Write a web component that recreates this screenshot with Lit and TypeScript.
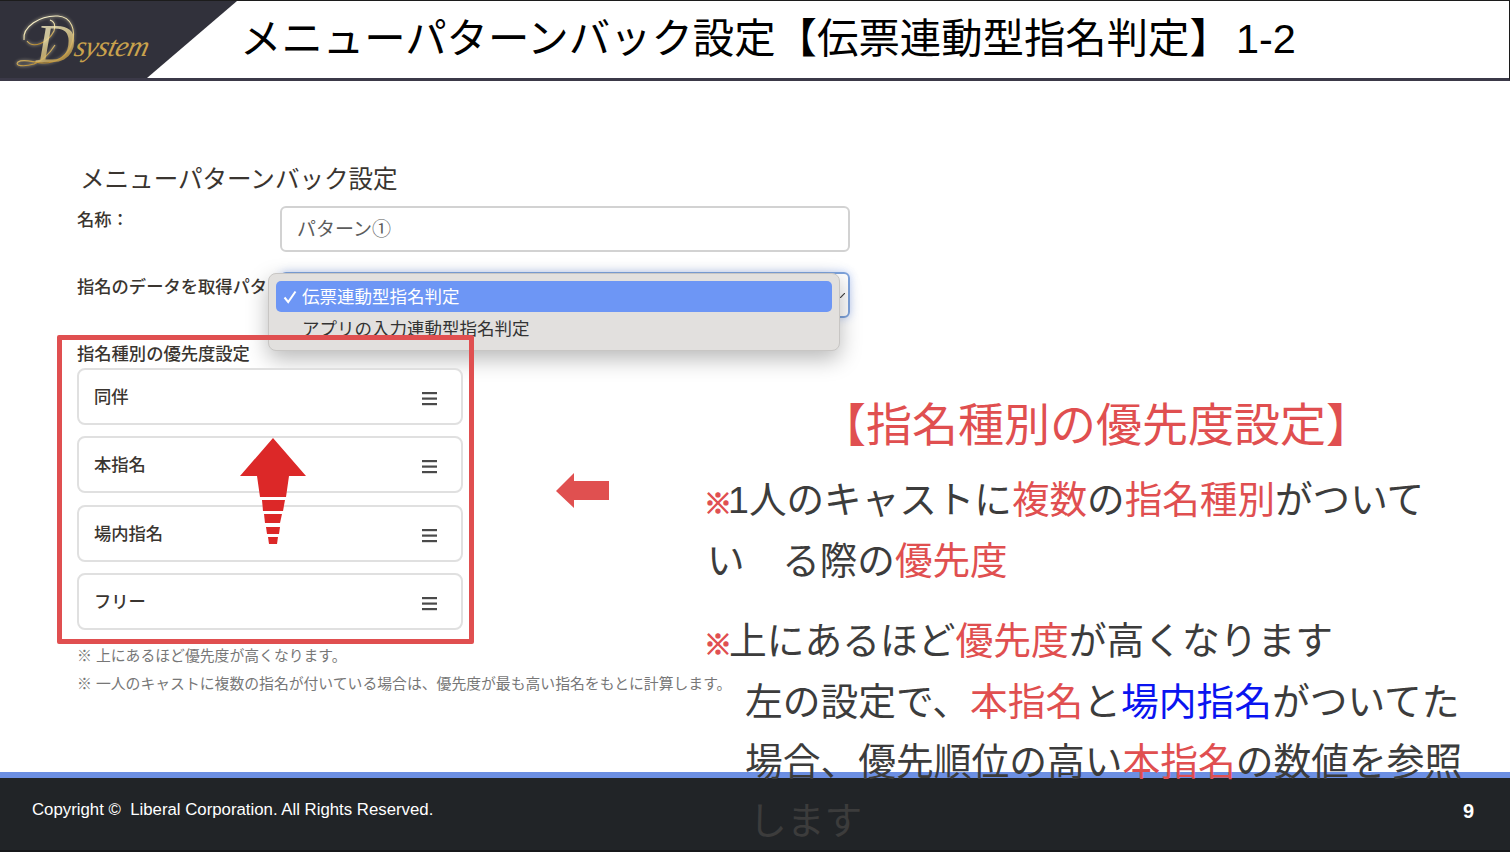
import { LitElement, html, css, svg } from "lit";
import { customElement } from "lit/decorators.js";

const priorityItems = ["同伴", "本指名", "場内指名", "フリー"];

const stripes = [
  "262,500 285,500 283,511 263,511",
  "264,514 282,514 280,523 265,523",
  "266,527 280,527 279,534 267,534",
  "268,537 278,537 277,544 269,544",
];

@customElement("app-root")
export class AppRoot extends LitElement {
  static styles = css`
    :host {
      display: flex;
      flex-direction: column;
      position: relative;
      width: 1510px;
      height: 852px;
      overflow: hidden;
      background: #fff;
      font-family: "Liberation Sans", "Noto Sans CJK JP", sans-serif;
      color: #3c3c3c;
    }

    /* header */
    .header {
      flex: none;
      display: flex;
      align-items: center;
      box-sizing: border-box;
      height: 81px;
      border-top: 1px solid #1c1c1c;
      border-right: 1px solid #1c1c1c;
      border-bottom: 3px solid #3b3948;
    }
    .logo {
      flex: none;
      display: block;
      width: 237px;
      height: 77px;
    }
    .title {
      margin: 0 0 0 3px;
      padding-bottom: 1px;
      font-size: 41.4px;
      font-weight: 400;
      line-height: 1;
      color: #000;
      white-space: nowrap;
    }
    .title-num {
      margin-left: 5px;
      font-size: 41.5px;
    }

    /* body */
    .main {
      flex: 1;
      position: relative;
      display: grid;
      grid-template-columns: 630px 1fr;
      padding-left: 77px;
      min-height: 0;
    }

    .form {
      padding-top: 82px;
      color: #3a3530;
      font-size: 17.3px;
      font-weight: 500;
    }
    .form-title {
      margin: 0 0 0 3px;
      font-size: 24.55px;
      font-weight: 400;
      line-height: 34px;
    }
    .row {
      display: grid;
      grid-template-columns: 203px 570px;
      white-space: nowrap;
    }
    .row-name {
      margin-top: 9px;
    }
    .row-source {
      margin-top: 20px;
    }
    .row label {
      line-height: 26px;
    }
    .row-name label {
      margin-top: 1px;
    }
    .row-source label {
      margin-top: 2px;
    }
    .input {
      box-sizing: border-box;
      height: 46px;
      padding-left: 15px;
      border: 2px solid #d2d2d2;
      border-radius: 6px;
      font-size: 19px;
      font-weight: 400;
      line-height: 43px;
      color: #5c5c5c;
    }
    .select {
      position: relative;
      box-sizing: border-box;
      height: 46px;
      border: 2px solid #7ea3dc;
      border-radius: 6px;
      box-shadow: 0 0 8px rgba(110, 150, 240, 0.45);
    }
    .chevron {
      position: absolute;
      right: 3px;
      top: 19px;
      width: 5px;
      height: 5px;
    }
    .dropdown {
      position: absolute;
      left: -14px;
      top: -1px;
      box-sizing: border-box;
      width: 572px;
      height: 78px;
      padding: 7px 7px;
      border: 1px solid #c8c6c4;
      border-radius: 8px;
      background: #e2e0de;
      box-shadow: 0 8px 22px rgba(0, 0, 0, 0.28);
      font-size: 17.5px;
      font-weight: 400;
      color: #333;
    }
    .option {
      display: flex;
      align-items: center;
      height: 31px;
      padding-left: 26px;
      border-radius: 5px;
    }
    .option.selected {
      position: relative;
      padding-bottom: 2px;
      box-sizing: border-box;
      background: #6d96f5;
      color: #fff;
    }
    .check {
      position: absolute;
      left: 7px;
      top: 9px;
      width: 14px;
      height: 14px;
    }

    .priority {
      position: relative;
      margin-top: 23px;
    }
    .priority-label {
      margin-bottom: 1px;
      line-height: 26px;
    }
    .list {
      display: flex;
      flex-direction: column;
      gap: 11.4px;
      width: 386px;
    }
    .item {
      display: flex;
      align-items: center;
      justify-content: space-between;
      box-sizing: border-box;
      height: 57px;
      padding: 0 24px 0 15px;
      border: 2px solid #e0e0e0;
      border-radius: 8px;
      background: #fff;
    }
    .item span {
      padding-bottom: 2px;
    }
    .bars {
      display: block;
      width: 15px;
      height: 14px;
      margin-top: 5px;
    }
    .frame {
      position: absolute;
      left: -20px;
      top: -6px;
      box-sizing: border-box;
      width: 417px;
      height: 309px;
      border: 5px solid #e04f50;
      border-radius: 2px;
      pointer-events: none;
    }
    .notes {
      margin-top: 12px;
      font-size: 14.83px;
      font-weight: 400;
      line-height: 28px;
      color: #777;
      white-space: nowrap;
    }

    .marks {
      position: absolute;
      left: 0;
      top: -81px;
      width: 700px;
      height: 700px;
      pointer-events: none;
    }

    /* right side explanation, runs over the footer in the original */
    .explain {
      position: relative;
      z-index: 2;
      padding-top: 314px;
      line-height: 61px;
      color: #3c3c3c;
      white-space: nowrap;
    }
    .explain h2 {
      margin: 0 0 15px;
      width: 778px;
      text-align: center;
      font-size: 46px;
      font-weight: 400;
      line-height: 60px;
      color: #e04f50;
    }
    .explain p {
      margin: 0;
      font-size: 37.75px;
    }
    .explain p.first {
      font-size: 37.6px;
    }
    .explain p + p {
      margin-top: 19px;
    }
    .red {
      color: #e04f50;
    }
    .blue {
      color: #0a14f0;
    }
    .mark {
      display: inline-block;
      width: 25px;
      margin-left: -3px;
      font-family: "Noto Sans CJK JP", sans-serif;
      font-size: 28px;
      font-weight: 700;
      letter-spacing: -4px;
      -webkit-text-stroke: 1px #e04f50;
      color: #e04f50;
      vertical-align: -1px;
      line-height: 1;
    }
    .first .mark {
      width: 24px;
    }
    .wrapped {
      display: block;
    }
    .indent {
      display: block;
      padding-left: 38px;
    }
    .indent.tight {
      margin-top: -1px;
    }
    .indent.last {
      margin-top: -2px;
      padding-left: 42px;
    }

    /* footer */
    .footer {
      flex: none;
      display: flex;
      align-items: center;
      justify-content: space-between;
      box-sizing: border-box;
      height: 80px;
      padding: 0 36px 8px 32px;
      border-top: 6px solid #6c8fe3;
      border-bottom: 2px solid #16181a;
      background: #212427;
      color: #fff;
      font-size: 16.8px;
    }
    .page {
      margin-top: 3px;
      font-size: 20px;
      font-weight: 700;
    }
  `;

  private renderLogo() {
    return html`
      <svg class="logo" viewBox="0 0 237 77" aria-label="Dsystem">
        <defs>
          <linearGradient id="gold" x1="0" y1="0" x2="0.4" y2="1">
            <stop offset="0" stop-color="#fbf8df"></stop>
            <stop offset="0.5" stop-color="#efe0a4"></stop>
            <stop offset="1" stop-color="#b98a2c"></stop>
          </linearGradient>
          <filter id="glow" x="-20%" y="-20%" width="140%" height="140%">
            <feGaussianBlur stdDeviation="1.8"></feGaussianBlur>
          </filter>
        </defs>
        <polygon points="0,0 237,0 147,77 0,77" fill="#31313b"></polygon>
        <g fill="none" stroke="#fff4c8" stroke-width="2.4" opacity="0.35" filter="url(#glow)">
          <path d="M24 39C22 26 40 14 58 15C72 16 76 30 72 42C68 55 56 62 44 62C34 62 24 57 18 61C14 65 24 66 34 63C42 60 50 52 55 44"></path>
          <path d="M27 40C33 48 48 42 54 30C56 24 54 20 50 19"></path>
        </g>
        <g fill="none" stroke="url(#gold)" stroke-width="1.1">
          <path d="M24 39C22 26 40 14 58 15C72 16 76 30 72 42C68 55 56 62 44 62C34 62 24 57 18 61C14 65 24 66 34 63C42 60 50 52 55 44"></path>
          <path d="M27 40C33 48 48 42 54 30C56 24 54 20 50 19"></path>
        </g>
        <text
          x="36"
          y="61"
          font-family="Liberation Serif, serif"
          font-style="italic"
          font-size="54"
          fill="url(#gold)"
          opacity="0.8"
        >D</text>
        <text
          x="0"
          y="0"
          transform="translate(73 55) skewX(-14)"
          font-family="Liberation Serif, serif"
          font-style="italic"
          font-size="29"
          textLength="74"
          fill="#c9a24d"
        >system</text>
      </svg>
    `;
  }

  private renderBars() {
    return html`
      <svg class="bars" viewBox="0 0 15 14">
        <rect x="0" y="0" width="15" height="2.2" fill="#4a4a4a"></rect>
        <rect x="0" y="5.5" width="15" height="2.2" fill="#4a4a4a"></rect>
        <rect x="0" y="11" width="15" height="2.2" fill="#4a4a4a"></rect>
      </svg>
    `;
  }

  render() {
    return html`
      <header class="header">
        ${this.renderLogo()}
        <h1 class="title">メニューパターンバック設定【伝票連動型指名判定】<span class="title-num">1-2</span></h1>
      </header>

      <main class="main">
        <section class="form">
          <h2 class="form-title">メニューパターンバック設定</h2>
          <div class="row row-name">
            <label>名称：</label>
            <div class="input">パターン①</div>
          </div>
          <div class="row row-source">
            <label>指名のデータを取得パターン：</label>
            <div class="select">
              <svg class="chevron" viewBox="0 0 5 5">
                <path d="M0 5L5 0" stroke="#444" stroke-width="1.2"></path>
              </svg>
              <div class="dropdown">
                <div class="option selected">
                  <svg class="check" viewBox="0 0 14 14">
                    <path d="M1.5 7.5L5.2 12L12.5 1.5" fill="none" stroke="#fff" stroke-width="2"></path>
                  </svg>
                  伝票連動型指名判定
                </div>
                <div class="option">アプリの入力連動型指名判定</div>
              </div>
            </div>
          </div>
          <div class="priority">
            <div class="priority-label">指名種別の優先度設定</div>
            <div class="list">
              ${priorityItems.map(
                (name) => html`
                  <div class="item">
                    <span>${name}</span>
                    ${this.renderBars()}
                  </div>
                `,
              )}
            </div>
            <div class="frame"></div>
          </div>
          <div class="notes">
            <div>※ 上にあるほど優先度が高くなります。</div>
            <div>※ 一人のキャストに複数の指名が付いている場合は、優先度が最も高い指名をもとに計算します。</div>
          </div>
        </section>

        <section class="explain">
          <h2>【指名種別の優先度設定】</h2>
          <p class="first">
            <span class="mark">※</span>1人のキャストに<span class="red">複数</span>の<span class="red">指名種別</span>がついて
            <span class="wrapped">い　る際の<span class="red">優先度</span></span>
          </p>
          <p>
            <span class="mark">※</span>上にあるほど<span class="red">優先度</span>が高くなります
            <span class="indent">左の設定で、<span class="red">本指名</span>と<span class="blue">場内指名</span>がついてた</span>
            <span class="indent tight">場合、優先順位の高い<span class="red">本指名</span>の数値を参照</span>
            <span class="indent last">します</span>
          </p>
        </section>

        <svg class="marks" viewBox="0 0 700 700">
          <polygon
            points="273,438 306,476 289,476 286,497 260,497 257,476 240,476"
            fill="#dc2828"
          ></polygon>
          ${stripes.map((points) => svg`<polygon points=${points} fill="#dc2828"></polygon>`)}
          <polygon
            points="556,491 574,473 574,481 609,481 609,500 574,500 574,508"
            fill="#e05050"
          ></polygon>
        </svg>
      </main>

      <footer class="footer">
        <span>Copyright ©&nbsp; Liberal Corporation. All Rights Reserved.</span>
        <span class="page">9</span>
      </footer>
    `;
  }
}
